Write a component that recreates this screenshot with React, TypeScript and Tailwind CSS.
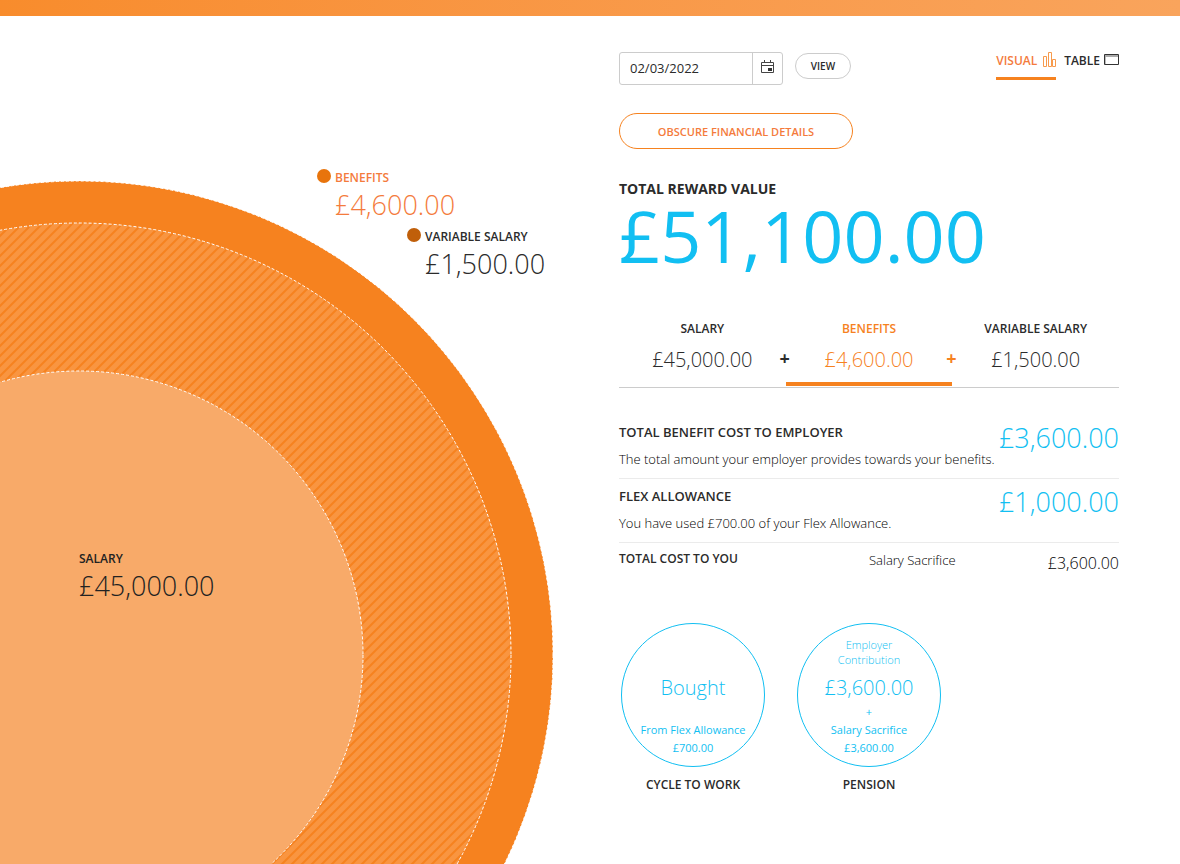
import type { ReactNode } from 'react'

interface Part {
  label: string
  amount: string
  active?: boolean
}

const parts: Part[] = [
  { label: 'Salary', amount: '£45,000.00' },
  { label: 'Benefits', amount: '£4,600.00', active: true },
  { label: 'Variable salary', amount: '£1,500.00' },
]

const CalendarIcon = () => (
  <svg width="13" height="14" viewBox="0 0 13 14" fill="none" stroke="#444" aria-hidden="true">
    <path d="M.5 2.5h12v10H.5zM.5 5.5h12" />
    <path d="M3.5 0v3M9.5 0v3" />
    <path d="M7 8h4v3H7z" fill="#333" stroke="none" />
  </svg>
)

const BarsIcon = () => (
  <svg width="13" height="15" viewBox="0 0 13 15" fill="none" stroke="#f79a4c" aria-hidden="true">
    <path d="M.5 4.5h3v10h-3zM5.5 .5h3v14h-3zM9.5 7.5h3v7h-3z" />
  </svg>
)

const TableIcon = () => (
  <svg width="15" height="11" viewBox="0 0 15 11" fill="none" aria-hidden="true">
    <path d="M1 1h13v2H1z" fill="#aaa" />
    <path d="M1.5 3v7" stroke="#bbb" />
    <path d="M.5 .5h14v10H.5z" stroke="#333" />
  </svg>
)

const RewardChart = () => (
  <svg className="block h-[848px] w-full" aria-hidden="true">
    <defs>
      <pattern id="stripes" width="10" height="10" patternUnits="userSpaceOnUse">
        <rect width="10" height="10" fill="#f99540" />
        <path d="M-2 2L2 -2M-2 12L12 -2M8 12L12 8" stroke="#f6821f" strokeWidth="2" />
      </pattern>
    </defs>
    <g stroke="#fff" strokeDasharray="3 2">
      <circle cx="79" cy="639" r="474" fill="#f6821f" />
      <circle cx="79" cy="639" r="432" fill="url(#stripes)" />
      <circle cx="79" cy="639" r="284" fill="#f8aa69" />
    </g>
  </svg>
)

interface CalloutProps {
  label: string
  amount: string
  className: string
  dot?: string
}

const Callout = ({ label, amount, className, dot }: CalloutProps) => (
  <div className={`absolute flex gap-1 ${className}`}>
    {dot && <span className={`size-[14px] rounded-full ${dot}`} />}
    <div>
      <p className="pt-px text-xs leading-4 font-semibold uppercase">{label}</p>
      <p className="text-[27px] leading-[38px] font-light">{amount}</p>
    </div>
  </div>
)

interface CostRowProps {
  title: string
  amount: string
  children: ReactNode
}

const CostRow = ({ title, amount, children }: CostRowProps) => (
  <div className="flex justify-between border-b border-[#ebebeb] pb-[9px] whitespace-nowrap">
    <div>
      <h3 className="mt-[7px] text-[13px] leading-5 font-semibold uppercase">{title}</h3>
      <p className="mt-[7px] text-[13px] leading-5 font-light text-black">{children}</p>
    </div>
    <p className="mt-[3px] text-[27px] leading-10 font-light text-[#12bff2]">{amount}</p>
  </div>
)

interface BenefitProps {
  name: string
  children: ReactNode
}

const Benefit = ({ name, children }: BenefitProps) => (
  <li className="w-[148px] text-center">
    <div className="mx-auto flex size-[144px] flex-col items-center rounded-full border border-[#12bff2] text-[11px] text-[#12bff2]">
      {children}
    </div>
    <h3 className="mt-2 text-xs leading-5 font-semibold uppercase">{name}</h3>
  </li>
)

export default function App() {
  return (
    <div className="min-h-screen overflow-hidden bg-white font-['Open_Sans',sans-serif] text-[#2b2b2b]">
      <header className="h-4 bg-linear-to-r from-[#f88c2c] to-[#f9a45c]" />
      <main className="grid grid-cols-[minmax(0,619fr)_minmax(500px,500fr)_minmax(0,61fr)]">
        <section className="relative" aria-label="Reward chart">
          <RewardChart />
          <Callout label="Benefits" amount="£4,600.00" className="top-[153px] left-[317px] text-[#f47b3c]" dot="bg-[#e8740c]" />
          <Callout label="Variable salary" amount="£1,500.00" className="top-[212px] left-[407px]" dot="bg-[#c05f0a]" />
          <Callout label="Salary" amount="£45,000.00" className="top-[534px] left-[79px] text-[#222]" />
        </section>

        <section>
          <div className="flex items-start pt-9">
            <div className="flex h-[33px] w-[164px] rounded-[3px] border border-[#ccc]">
              <input
                type="text"
                aria-label="Valuation date"
                defaultValue="02/03/2022"
                className="w-0 flex-1 px-[10px] text-[13px] outline-none"
              />
              <button type="button" aria-label="Open calendar" className="flex w-[30px] justify-center border-l border-[#ccc] pt-[7px]">
                <CalendarIcon />
              </button>
            </div>
            <button type="button" className="mt-px ml-3 h-[26px] w-14 rounded-full border border-[#ccc] text-[10px] font-semibold uppercase">
              View
            </button>
            <nav className="ml-auto flex gap-2 text-xs leading-[18px] font-semibold uppercase">
              <a href="#visual" className="flex h-7 w-[60px] justify-between border-b-3 border-[#f6821f] text-[#f47b3c]">
                Visual <BarsIcon />
              </a>
              <a href="#table" className="flex gap-1">
                Table <span className="pt-[2px]"><TableIcon /></span>
              </a>
            </nav>
          </div>

          <button
            type="button"
            className="mt-7 block h-9 w-[234px] rounded-full border border-[#f6821f] pt-[2px] text-[11px] font-semibold text-[#f47b3c] uppercase"
          >
            Obscure financial details
          </button>

          <h1 className="mt-[30px] text-sm leading-5 font-bold uppercase">Total reward value</h1>
          <p className="text-[72px] leading-[72px] text-[#12bff2]">£51,100.00</p>

          <ul className="mt-11 grid grid-cols-3 border-b border-[#ccc] text-center">
            {parts.map(({ label, amount, active }, i) => (
              <li key={label} className={`relative h-[72px] ${active ? 'text-[#f6821f]' : ''}`}>
                <h2 className="pt-[6px] text-xs leading-4 font-semibold uppercase">{label}</h2>
                <p className="mt-2 text-xl leading-[30px] font-light">{amount}</p>
                {i < parts.length - 1 && (
                  <span className="absolute top-7 -right-2 w-[18px] text-lg leading-[30px] font-bold">+</span>
                )}
                {active && <span className="absolute inset-x-0 bottom-px h-1 bg-[#f6821f]" />}
              </li>
            ))}
          </ul>

          <div className="mt-[27px]">
            <CostRow title="Total benefit cost to employer" amount="£3,600.00">
              The total amount your employer provides towards your benefits.
            </CostRow>
            <CostRow title="Flex allowance" amount="£1,000.00">
              You have used £700.00 of your Flex Allowance.
            </CostRow>
            <div className="grid grid-cols-2 pt-[6px]">
              <h3 className="text-xs leading-5 font-semibold uppercase">Total cost to you</h3>
              <p className="flex justify-between text-[13px] leading-[22px] font-light text-black">
                Salary Sacrifice
                <span className="pt-1 text-base leading-5">£3,600.00</span>
              </p>
            </div>
          </div>

          <ul className="mt-[50px] flex gap-7">
            <Benefit name="Cycle to work">
              <p className="mt-[50px] text-xl leading-7 font-light">Bought</p>
              <p className="mt-[18px] leading-5">From Flex Allowance</p>
              <p className="leading-4">£700.00</p>
            </Benefit>
            <Benefit name="Pension">
              <p className="mt-[13px] w-20 leading-[15px] font-light">Employer Contribution</p>
              <p className="mt-[7px] text-xl leading-7 font-light">£3,600.00</p>
              <p className="leading-5">+</p>
              <p className="leading-4">Salary Sacrifice</p>
              <p className="leading-5">£3,600.00</p>
            </Benefit>
          </ul>
        </section>
      </main>
    </div>
  )
}
